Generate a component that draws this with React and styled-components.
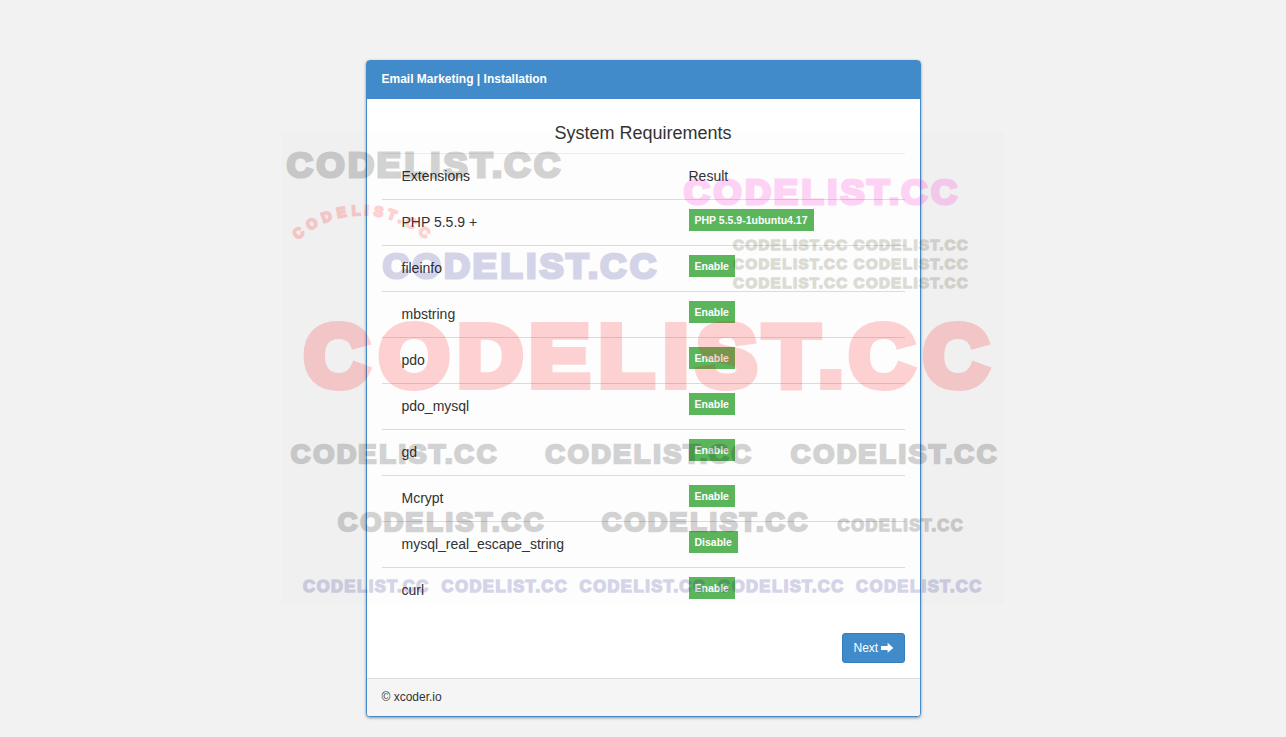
import React from 'react';
import styled, { createGlobalStyle } from 'styled-components';

const GlobalStyle = createGlobalStyle`
  *, *::before, *::after { box-sizing: border-box; }
  body {
    margin: 0;
    background: #f2f2f2;
    color: #333;
    font: 14px/20px "Liberation Sans", Arial, Helvetica, sans-serif;
  }
`;

const Page = styled.main`
  position: relative;
  display: flex;
  justify-content: center;
  align-items: flex-start;
  width: 1286px;
  height: 737px;
  padding-top: 60px;
  overflow: hidden;
`;

const Panel = styled.section`
  width: 555px;
  border: 1px solid #428bca;
  border-radius: 4px;
  background: #fff;
  box-shadow: 0 1px 3px rgba(0, 0, 0, 0.4);
`;

const PanelHeader = styled.header`
  height: 38px;
  padding: 8px 15px 0;
  background: #428bca;
  color: #fff;
  font-size: 12px;
  font-weight: 700;
`;

const PanelBody = styled.div`
  display: flex;
  flex-direction: column;
  height: 579px;
  padding: 24px 15px 15px;
`;

const Title = styled.h1`
  margin: 0;
  height: 31px;
  border-bottom: 1px solid #eee;
  font-size: 18px;
  line-height: 20px;
  font-weight: 400;
  text-align: center;
`;

const Row = styled.div`
  display: grid;
  grid-template-columns: 287px 1fr;
  height: 46px;
  padding: 12px 0 0 20px;
  border-bottom: ${({ $last }) => ($last ? '0' : '1px solid #ddd')};
`;

const Badge = styled.span`
  justify-self: start;
  height: 22px;
  margin-top: -3px;
  padding: 0 6px;
  background: #5cb85c;
  color: #fff;
  font-size: 10.5px;
  line-height: 22px;
  font-weight: 700;
`;

const NextButton = styled.button`
  display: flex;
  align-items: center;
  gap: 3px;
  align-self: flex-end;
  width: 63px;
  height: 30px;
  margin-top: auto;
  padding: 0 10px 0 11px;
  border: 1px solid #357ebd;
  border-radius: 3px;
  background: #428bca;
  color: #fff;
  font: 12px/18px "Liberation Sans", Arial, sans-serif;
`;

const PanelFooter = styled.footer`
  height: 38px;
  padding: 8px 15px 0;
  border-top: 1px solid #ddd;
  border-radius: 0 0 3px 3px;
  background: #f5f5f5;
  font-size: 12px;
`;

const Overlay = styled.svg`
  position: absolute;
  inset: 0;
  pointer-events: none;
  font-family: "Liberation Sans", Arial, sans-serif;
  font-weight: 700;
`;

const ROWS = [
  ['PHP 5.5.9 +', 'PHP 5.5.9-1ubuntu4.17'],
  ['fileinfo', 'Enable'],
  ['mbstring', 'Enable'],
  ['pdo', 'Enable'],
  ['pdo_mysql', 'Enable'],
  ['gd', 'Enable'],
  ['Mcrypt', 'Enable'],
  ['mysql_real_escape_string', 'Disable'],
  ['curl', 'Enable'],
];

const GREY = ['#000', 0.165];
const RED = ['#f00', 0.17];
const NAVY = ['#000080', 0.155];
const OLIVE = ['#2d2d00', 0.155];
const PINK = ['#ff00c8', 0.165];

// Left edge, baseline, width and ink of each mark
const MARKS = [
  [286.7, 179, 274, GREY],
  [683.7, 205.5, 274, PINK],
  [382.7, 279.2, 274, NAVY],
  [304, 390.3, 686, RED],
  ...[250.3, 269.3, 288.3].flatMap((y) => [[733, y, 114.5, OLIVE], [853.5, y, 114.5, OLIVE]]),
  ...[290.7, 545.3, 790.7].map((x) => [x, 464.3, 206, GREY]),
  [337.7, 531.7, 206, GREY],
  [601.7, 531.7, 206, GREY],
  [837.5, 532, 125.5, GREY],
  ...[303, 441.5, 579.5, 718, 856].map((x) => [x, 593.2, 125.5, NAVY]),
];

// Letter positions at a total width of 686, before the 1.04 widening
const LETTERS = '0 72 147.5 216.5 283.5 345.5 377.5 442 494.5 524 595.5';

function Mark({ x, y, width, ink: [color, opacity] }) {
  const k = width / 686;
  return (
    <text
      transform={`translate(${x} ${y}) scale(${k * 1.04} ${k})`}
      x={LETTERS}
      y="-4"
      fontSize="87"
      fill={color}
      stroke={color}
      strokeWidth="8"
      strokeLinejoin="miter"
      opacity={opacity}
    >
      CODELIST.CC
    </text>
  );
}

function Watermark() {
  return (
    <Overlay width="1286" height="737" viewBox="0 0 1286 737" aria-hidden="true">
      <rect x="282" y="132" width="722" height="472" fill="rgba(0,0,0,.008)" />
      {MARKS.map(([x, y, width, ink]) => (
        <Mark key={`${x}-${y}`} x={x} y={y} width={width} ink={ink} />
      ))}
      <path id="arc" d="M297.8 240A95 95 0 0 1 426.2 240" fill="none" />
      <text
        fontSize="14"
        fill={RED[0]}
        stroke={RED[0]}
        strokeWidth="2"
        opacity={RED[1]}
        x="0 15 31 46 60.5 73 81.5 95 106.5 114 129.5"
      >
        <textPath href="#arc">CODELIST.CC</textPath>
      </text>
    </Overlay>
  );
}

function ArrowRight() {
  return (
    <svg width="13" height="12" viewBox="0 0 13 12" fill="currentColor" aria-hidden="true">
      <path d="M0 4H7V0.5L13 6L7 11V8H0Z" />
    </svg>
  );
}

export default function App() {
  return (
    <>
      <GlobalStyle />
      <Page>
        <Panel>
          <PanelHeader>Email Marketing | Installation</PanelHeader>
          <PanelBody>
            <Title>System Requirements</Title>
            <Row>
              <span>Extensions</span>
              <span>Result</span>
            </Row>
            {ROWS.map(([name, result], i) => (
              <Row key={name} $last={i === ROWS.length - 1}>
                <span>{name}</span>
                <Badge>{result}</Badge>
              </Row>
            ))}
            <NextButton type="button">
              Next
              <ArrowRight />
            </NextButton>
          </PanelBody>
          <PanelFooter>© xcoder.io</PanelFooter>
        </Panel>
        <Watermark />
      </Page>
    </>
  );
}
